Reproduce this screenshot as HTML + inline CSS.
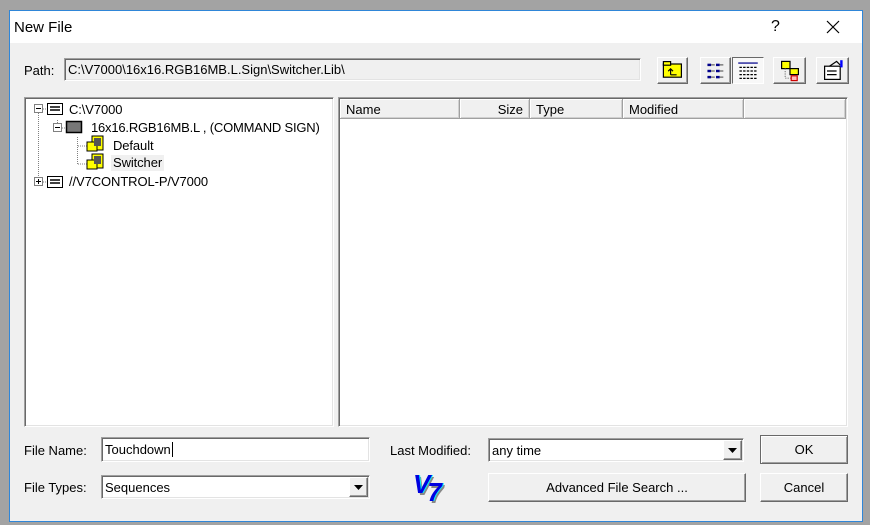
<!DOCTYPE html>
<html><head><style>
*{box-sizing:border-box;margin:0;padding:0}
body{width:870px;height:525px;background:#a3a3a3;position:relative;overflow:hidden;font-family:"Liberation Sans",sans-serif;font-size:13px;color:#000}
.a{position:absolute}
#win{left:9px;top:10px;width:854px;height:512px;background:#f0f0f0;border:1px solid #2f86d8}
#title{left:0;top:0;width:852px;height:32px;background:#fff}
.sunk{border-top:1px solid #a0a0a0;border-left:1px solid #a0a0a0;border-right:1px solid #fff;border-bottom:1px solid #fff;box-shadow:inset 1px 1px 0 #696969,inset -1px -1px 0 #e3e3e3}
.btn{background:#f0f0f0;border-top:1px solid #fff;border-left:1px solid #fff;border-right:1px solid #696969;border-bottom:1px solid #696969;box-shadow:inset -1px -1px 0 #a0a0a0;text-align:center}
.hd{top:0;height:20px;background:#f0f0f0;border-right:1px solid #a0a0a0;border-bottom:1px solid #a0a0a0;box-shadow:inset 1px 1px 0 #fff,inset -1px -1px 0 #d0d0d0;line-height:21px;padding:0 6px}
.tx{font-size:13px;letter-spacing:-0.1px}
</style></head><body>
<div id="win" class="a">
<div id="title" class="a"></div>
<div class="a" style="left:4px;top:8px;font-size:15px">New File</div>
<div class="a" style="left:761px;top:7px;font-size:16px">?</div>
<svg class="a" style="left:816px;top:9px" width="14" height="14"><path d="M1 1L13 13M13 1L1 13" stroke="#000" stroke-width="1.2"/></svg>
</div>
<div class="a" style="left:24px;top:63px">Path:</div>
<div class="a sunk" style="left:64px;top:58px;width:577px;height:23px;background:#f0f0f0;padding:3px 3px;font-size:13px">C:\V7000\16x16.RGB16MB.L.Sign\Switcher.Lib\</div>

<div class="a btn" style="left:657px;top:57px;width:31px;height:27px"><svg width="24" height="20" viewBox="0 0 20 16" style="margin-top:2px"><rect x="2" y="3" width="15" height="11" fill="#ff0" stroke="#000"/><rect x="2" y="1" width="6" height="3" fill="#ff0" stroke="#000"/><path d="M8 12V7M6 9l2-2 2 2M8 12h5" stroke="#000" fill="none"/></svg></div>
<div class="a btn" style="left:700px;top:57px;width:31px;height:27px"><svg width="22" height="20" viewBox="0 0 18 16" style="margin-top:3px"><g fill="#00008b"><rect x="2" y="2" width="3" height="2"/><rect x="9" y="2" width="3" height="2"/><rect x="2" y="7" width="3" height="2"/><rect x="9" y="7" width="3" height="2"/><rect x="2" y="12" width="3" height="2"/><rect x="9" y="12" width="3" height="2"/></g><path d="M5 3h3M12 3h3M5 8h3M12 8h3M5 13h3M12 13h3" stroke="#666"/></svg></div>
<div class="a" style="left:732px;top:57px;width:32px;height:27px;background:#f8f8f8;border:1px solid #696969;border-right-color:#fff;border-bottom-color:#fff"><svg width="22" height="20" viewBox="0 0 18 16" style="margin:3px 0 0 4px"><rect x="1" y="1" width="16" height="1" fill="#00008b"/><g stroke="#000" stroke-dasharray="2 1"><path d="M2 5h14M2 8h14M2 11h14M2 14h14"/></g></svg></div>
<div class="a btn" style="left:773px;top:57px;width:33px;height:27px"><svg width="24" height="24" viewBox="0 0 20 20" style="margin-top:1px"><rect x="3" y="2" width="7" height="6" fill="#ff0" stroke="#000"/><rect x="10" y="8" width="7" height="5" fill="#ff0" stroke="#000"/><path d="M6 8v8h5" stroke="#888" stroke-dasharray="1 1" fill="none"/><rect x="11" y="14" width="5" height="4" fill="#fbb" stroke="#c00"/></svg></div>
<div class="a btn" style="left:816px;top:57px;width:33px;height:27px"><svg width="24" height="24" viewBox="0 0 20 20" style="margin-top:1px"><rect x="3" y="6" width="13" height="11" fill="#fff" stroke="#000"/><path d="M5 10h8M5 13h8" stroke="#000"/><path d="M7 6l6-4 3 3" stroke="#000" fill="none"/><rect x="16" y="1" width="2" height="6" fill="#00f"/></svg></div>

<div class="a sunk" style="left:24px;top:97px;width:310px;height:330px;background:#fff"></div>
<svg class="a" style="left:26px;top:99px" width="80" height="95">
<g stroke="#808080" stroke-dasharray="1 1" fill="none"><path d="M12.5 10v75M13 10h8M31.5 21v8M32 29h8M51.5 38v28M52 47h10M52 65h10M13 83h8"/></g>
<rect x="8.5" y="5.5" width="8" height="8" fill="#fff" stroke="#808080"/><path d="M10 9.5h5" stroke="#000"/>
<rect x="27.5" y="24.5" width="8" height="8" fill="#fff" stroke="#808080"/><path d="M29 28.5h5" stroke="#000"/>
<rect x="8.5" y="78.5" width="8" height="8" fill="#fff" stroke="#808080"/><path d="M10 82.5h5M12.5 80v5" stroke="#000"/>
<rect x="21.5" y="4.5" width="15" height="11" fill="#fff" stroke="#000"/><path d="M24 8h10M24 11h10" stroke="#000" stroke-width="1.5"/>
<rect x="21.5" y="77.5" width="15" height="11" fill="#fff" stroke="#000"/><path d="M24 81h10M24 84h10" stroke="#000" stroke-width="1.5"/>
<rect x="40.5" y="22.5" width="15" height="11" fill="#777" stroke="#000" stroke-width="1.5"/>
<g><rect x="66" y="37" width="11" height="14" fill="#ff0" stroke="#000"/><rect x="61" y="43" width="10" height="9" fill="#ff0" stroke="#000"/><rect x="68" y="39" width="7" height="8" fill="#555"/></g>
<g><rect x="66" y="55" width="11" height="14" fill="#ff0" stroke="#000"/><rect x="61" y="61" width="10" height="9" fill="#ff0" stroke="#000"/><rect x="68" y="57" width="7" height="8" fill="#555"/></g>
</svg>
<div class="a tx" style="left:69px;top:102px">C:\V7000</div>
<div class="a tx" style="left:91px;top:120px;letter-spacing:-0.2px">16x16.RGB16MB.L , (COMMAND SIGN)</div>
<div class="a tx" style="left:113px;top:138px">Default</div>
<div class="a tx" style="left:111px;top:155px;background:#f0f0f0;padding:0 2px;height:16px">Switcher</div>
<div class="a tx" style="left:69px;top:174px">//V7CONTROL-P/V7000</div>

<div class="a sunk" style="left:338px;top:97px;width:510px;height:330px;background:#fff">
<div class="a hd" style="left:1px;width:120px;top:1px">Name</div>
<div class="a hd" style="left:121px;width:70px;top:1px;text-align:right">Size</div>
<div class="a hd" style="left:191px;width:93px;top:1px">Type</div>
<div class="a hd" style="left:284px;width:121px;top:1px">Modified</div>
<div class="a hd" style="left:405px;width:102px;top:1px"></div>
</div>

<div class="a" style="left:24px;top:443px">File Name:</div>
<div class="a sunk" style="left:101px;top:437px;width:269px;height:25px;background:#fff;padding:4px 3px">Touchdown<span style="border-left:1px solid #000;margin-left:1px"></span></div>
<div class="a" style="left:24px;top:480px">File Types:</div>
<div class="a sunk" style="left:101px;top:475px;width:269px;height:24px;background:#fff;padding:4px 3px">Sequences</div>
<div class="a btn" style="left:349px;top:477px;width:19px;height:20px"><svg width="9" height="5" style="margin-top:7px"><path d="M0 0h9L4.5 5z"/></svg></div>
<div class="a" style="left:390px;top:443px">Last Modified:</div>
<div class="a sunk" style="left:488px;top:438px;width:256px;height:24px;background:#fff;padding:4px 3px">any time</div>
<div class="a btn" style="left:723px;top:440px;width:19px;height:20px"><svg width="9" height="5" style="margin-top:7px"><path d="M0 0h9L4.5 5z"/></svg></div>
<div class="a" style="left:413px;top:469px;font:italic bold 26px 'Liberation Sans',sans-serif;color:#0000e0;text-shadow:1px 0 #0ff,2px 2px #888;letter-spacing:-3px">V<span style="position:relative;top:8px">7</span></div>
<div class="a btn" style="left:488px;top:473px;width:258px;height:29px;line-height:27px">Advanced File Search ...</div>
<div class="a" style="left:760px;top:435px;width:88px;height:29px;border:1px solid #696969;background:#f0f0f0;line-height:27px;text-align:center;box-shadow:inset 1px 1px 0 #fff,inset -1px -1px 0 #a0a0a0">OK</div>
<div class="a btn" style="left:760px;top:473px;width:88px;height:29px;line-height:27px">Cancel</div>
</body></html>
